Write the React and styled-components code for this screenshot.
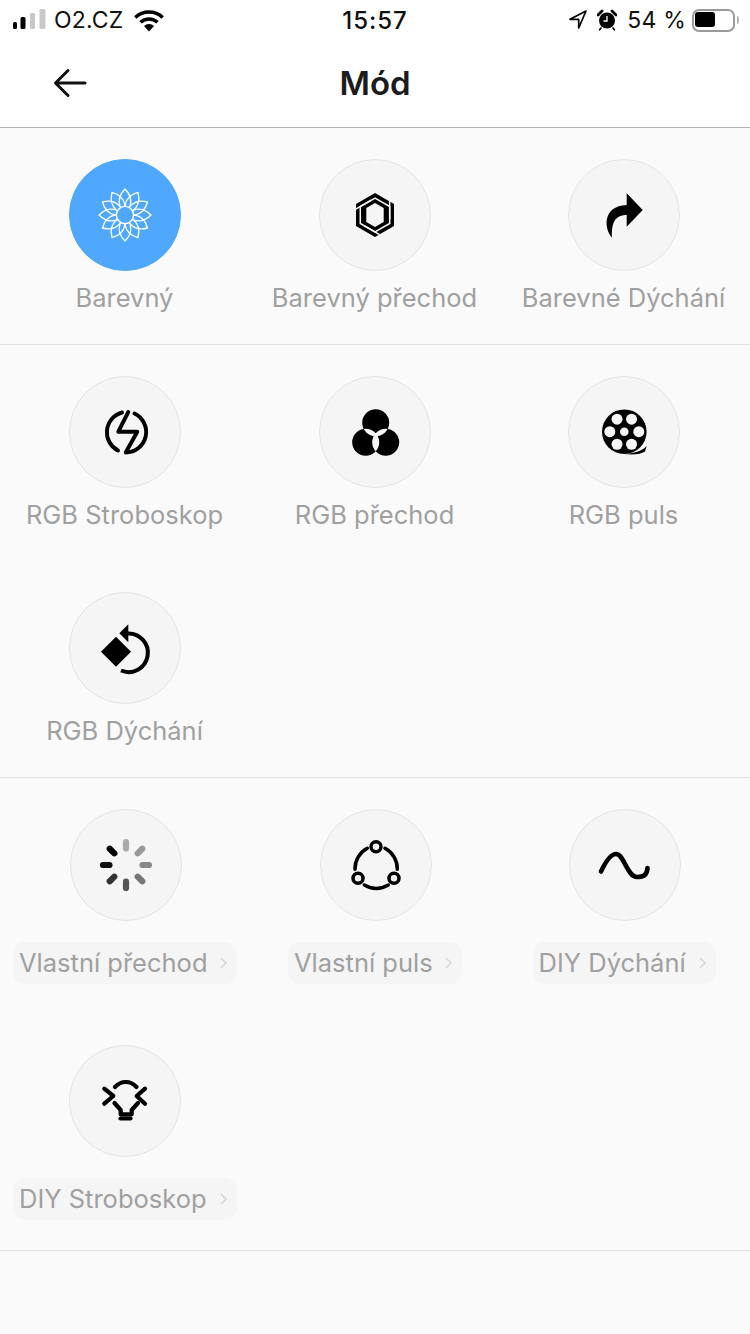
import React from "react";
import styled, { createGlobalStyle } from "styled-components";

const Global = createGlobalStyle`
  html, body { margin: 0; padding: 0; background: #fafafa; }
  body { font-family: Inter, "Noto Sans", "Liberation Sans", sans-serif; }
  * { box-sizing: border-box; }
`;

const Page = styled.div`
  width: 750px;
  height: 1334px;
  background: #fafafa;
  overflow: hidden;
`;
const StatusBar = styled.div`
  height: 40px;
  background: #fff;
  display: grid;
  grid-template-columns: 1fr auto 1fr;
  align-items: center;
  padding: 0 15px 0 13px;
  color: #111;
`;
const StatusGroup = styled.div`
  display: flex;
  align-items: center;
  justify-content: ${(p) => (p.$end ? "flex-end" : "flex-start")};
`;
const Carrier = styled.span`
  font-size: 23px;
  font-weight: 400;
  margin: 0 10px 0 8px;
  letter-spacing: 0.2px;
`;
const Clock = styled.span`
  font-size: 24px;
  font-weight: 500;
  letter-spacing: 1px;
  margin-left: 2px;
`;
const Percent = styled.span`
  font-size: 23px;
  font-weight: 400;
  margin: 0 6px 0 10px;
  letter-spacing: 0.2px;
`;
const Battery = styled.div`
  width: 43px;
  height: 23px;
  border: 2px solid #9b9b9b;
  border-radius: 7px;
  padding: 1px;
  position: relative;
  &::before {
    content: "";
    display: block;
    width: 20px;
    height: 15px;
    border-radius: 3px;
    background: #000;
  }
  &::after {
    content: "";
    position: absolute;
    right: -6px;
    top: 5px;
    width: 2px;
    height: 8px;
    border-radius: 0 2px 2px 0;
    background: #b5b5b5;
  }
`;
const LocateSlot = styled.div`
  display: flex;
  margin-right: 9px;
`;
const Nav = styled.header`
  height: 88px;
  background: #fff;
  border-bottom: 1px solid #b4b4b4;
  display: grid;
  grid-template-columns: 1fr auto 1fr;
  align-items: center;
`;
const BackSlot = styled.div`
  display: flex;
  padding: 0 0 1px 53px;
`;
const Title = styled.h1`
  margin: 0 0 1px;
  font-size: 33px;
  line-height: 40px;
  font-weight: 600;
  color: #1c1c1c;
`;
const Section = styled.section`
  display: grid;
  grid-template-columns: 250px 250px 248px;
  border-bottom: 1px solid #e2e2e2;
`;
const Cell = styled.div`
  height: ${(p) => (p.$pill ? 236 : 216)}px;
  padding-top: 31px;
  display: flex;
  flex-direction: column;
  align-items: center;
`;
const Circle = styled.div`
  width: 112px;
  height: 112px;
  flex: none;
  border-radius: 50%;
  display: flex;
  align-items: center;
  justify-content: center;
  background: ${(p) => (p.$active ? "#4fa8fb" : "#f5f5f5")};
  border: 1px solid ${(p) => (p.$active ? "#4fa8fb" : "#e4e4e4")};
  margin-left: ${(p) => (p.$nudge ? 2 : 0)}px;
`;
const Label = styled.div`
  margin: 12px 1px 0 0;
  height: 30px;
  font-size: 25.5px;
  line-height: 30px;
  color: #a0a0a0;
  white-space: nowrap;
`;
const Pill = styled.div`
  margin-top: 21px;
  height: 42px;
  width: ${(p) => p.$w}px;
  border-radius: 12px;
  background: #f5f5f5;
  padding: 0 0 2px 6px;
  display: flex;
  align-items: center;
  font-size: 25.5px;
  color: #a0a0a0;
  white-space: nowrap;
  position: relative;
`;
const Chevron = styled.svg`
  position: absolute;
  right: 10px;
  top: 15px;
`;

const Ico = ({ children }) => (
  <svg width="110" height="110" viewBox="1 1 110 110">
    {children}
  </svg>
);

const Flower = () => (
  <Ico>
    {Array.from({ length: 12 }).map((_, i) => (
      <path
        key={i}
        d="M56 30 C61 35 63 41 61 47 L56 56 L51 47 C49 41 51 35 56 30 Z"
        fill="none"
        stroke="#fff"
        strokeWidth="1.3"
        strokeLinejoin="round"
        transform={`rotate(${i * 30} 56 56)`}
      />
    ))}
    <circle cx="56" cy="56" r="8.6" fill="#4fa8fb" stroke="#fff" strokeWidth="1.4" />
  </Ico>
);

const Hexa = () => (
  <Ico>
    <path d="M56 34 L75 45 V67 L56 78 L37 67 V45 Z" fill="#000" />
    <path d="M56 44 L64.7 49 V63 L56 68 L47.3 63 V49 Z" fill="#f5f5f5" />
    {[0, 120, 240].map((r) => (
      <path
        key={r}
        d="M35 51.2 L56 39 L70.7 47.5 V60"
        transform={`rotate(${r} 56 56)`}
        fill="none"
        stroke="#f5f5f5"
        strokeWidth="1.5"
      />
    ))}
  </Ico>
);

const Share = () => (
  <Ico>
    <path d="M58.7 34.3 L74.7 51 L58.7 67.7 V56 C50 56 43 60 44 78.5 C36 70 34 47 58.7 46 Z" fill="#000" />
  </Ico>
);

const Bolt = () => (
  <Ico>
    <g fill="none" stroke="#000" strokeWidth="3.9" strokeLinecap="round" strokeLinejoin="round">
      <path d="M59.3 36 L49.3 55.7 H68.3 L56.7 76.5 A20.5 20.5 0 0 0 65.5 37.5" />
      <path d="M53 36.5 A20.5 20.5 0 0 0 49 74.5" />
    </g>
  </Ico>
);

const Trio = () => (
  <Ico>
    <defs>
      <clipPath id="ct">
        <circle cx="56.7" cy="46.7" r="13.5" />
      </clipPath>
      <clipPath id="cl">
        <circle cx="46.7" cy="66.3" r="13.5" />
      </clipPath>
    </defs>
    <circle cx="56.7" cy="46.7" r="13.5" fill="#000" />
    <circle cx="46.7" cy="66.3" r="13.5" fill="#000" />
    <circle cx="66.7" cy="66.3" r="13.5" fill="#000" />
    <circle cx="66.7" cy="66.3" r="13.5" fill="#f5f5f5" clipPath="url(#cl)" />
    <circle cx="46.7" cy="66.3" r="13.5" fill="#f5f5f5" clipPath="url(#ct)" />
    <circle cx="66.7" cy="66.3" r="13.5" fill="#f5f5f5" clipPath="url(#ct)" />
  </Ico>
);

const Reel = () => (
  <Ico>
    <circle cx="56.3" cy="55.7" r="22.3" fill="#000" />
    <path d="M58 78 C67 77 74 75 78.7 70 L77 75.5 C73 78 66 79 56 78 Z" fill="#000" />
    <circle cx="56.3" cy="55.7" r="4.3" fill="#f5f5f5" />
    {[0, 60, 120, 180, 240, 300].map((a) => (
      <circle
        key={a}
        cx={56.3 + 14.5 * Math.cos((a * Math.PI) / 180)}
        cy={55.7 + 14.5 * Math.sin((a * Math.PI) / 180)}
        r="5.5"
        fill="#f5f5f5"
      />
    ))}
  </Ico>
);

const Rotate = () => (
  <Ico>
    <path d="M32 59.7 L47 44.7 L62 59.7 L47 74.7 Z" fill="#000" />
    <path d="M59.3 32.3 V50.3 L50.3 41.3 Z" fill="#000" />
    <path d="M58 41.5 A19.3 19.3 0 1 1 52 78.5" fill="none" stroke="#000" strokeWidth="4" />
  </Ico>
);

const Spinner = () => {
  const colors = ["#aaa", "#999", "#888", "#777", "#555", "#333", "#111", "#000"];
  return (
    <Ico>
      {colors.map((c, i) => (
        <line
          key={i}
          x1="56"
          y1="39.5"
          x2="56"
          y2="33"
          stroke={c}
          strokeWidth="6.2"
          strokeLinecap="round"
          transform={`rotate(${i * 45} 56 56)`}
        />
      ))}
    </Ico>
  );
};

const Network = () => (
  <Ico>
    <g fill="none" stroke="#000" strokeWidth="3.5" strokeLinecap="round">
      <circle cx="56" cy="37.7" r="5" />
      <circle cx="38" cy="69.3" r="5" />
      <circle cx="74" cy="69.3" r="5" />
      <path d="M47.3 39.3 A23 23 0 0 0 35 60.3" />
      <path d="M65 39.3 A23 23 0 0 1 77.3 60.3" />
      <path d="M44.3 76 A23 23 0 0 0 68.3 76" />
    </g>
  </Ico>
);

const Wave = () => (
  <Ico>
    <path
      d="M32 62.5 C36 54 41 45 47 45 C55 45 58 68 68 68 C75 68 78 66 78.5 59"
      fill="none"
      stroke="#000"
      strokeWidth="4.6"
      strokeLinecap="round"
    />
  </Ico>
);

const Bulb = () => (
  <Ico>
    <g fill="none" stroke="#000" strokeWidth="4.2" strokeLinecap="round" strokeLinejoin="round">
      <path d="M46 42 Q50.5 37 56.7 37 Q63 37 67.5 42" />
      <path d="M35.3 43.7 L44.3 51 L35.3 58.7" />
      <path d="M76 43.7 L67.7 51 L76 58.7" />
      <path d="M45.5 58 L51.7 65 V69.3 H62.7 V65 L69 58" />
      <path d="M51.5 73.5 H61.5" />
    </g>
  </Ico>
);

const Signal = () => (
  <svg width="33" height="22" viewBox="0 0 33 22">
    <rect x="0" y="13" width="4" height="7" rx="1.5" fill="#000" />
    <rect x="7.5" y="8" width="5" height="12" rx="1.5" fill="#000" />
    <rect x="17" y="4" width="5" height="16" rx="1.5" fill="#c9c9c9" />
    <rect x="26.5" y="0" width="6" height="20" rx="1.5" fill="#c9c9c9" />
  </svg>
);
const Wifi = () => (
  <svg width="30" height="23" viewBox="0 0 30 23">
    <g fill="none" stroke="#000" strokeWidth="3.6">
      <path d="M1.3 8.5 A20 20 0 0 1 28.7 8.5" />
      <path d="M6.5 13.3 A12.5 12.5 0 0 1 23.5 13.3" />
    </g>
    <path d="M10 17 A7 7 0 0 1 20 17 L15 22.5 Z" fill="#000" />
  </svg>
);
const Locate = () => (
  <svg width="20" height="22" viewBox="0 0 20 22">
    <path
      d="M18 2 L2 10.3 H10.7 V19 Z"
      fill="none"
      stroke="#000"
      strokeWidth="1.7"
      strokeLinejoin="round"
    />
  </svg>
);
const Alarm = () => (
  <svg width="20" height="22" viewBox="0 0 20 22">
    <circle cx="10" cy="11.5" r="8" fill="#000" />
    <path d="M1 6 L5 2 M19 6 L15 2" stroke="#000" strokeWidth="2.8" strokeLinecap="round" />
    <path d="M4 19 L2.6 20.8 M16 19 L17.4 20.8" stroke="#000" strokeWidth="1.6" strokeLinecap="round" />
    <path d="M10 7 V12 H6.5" fill="none" stroke="#fff" strokeWidth="1.3" />
  </svg>
);
const Back = () => (
  <svg width="34" height="30" viewBox="0 0 34 30">
    <path
      d="M32 15 H3 M15 2.5 L2.5 15 L15 27.5"
      fill="none"
      stroke="#111"
      strokeWidth="3"
      strokeLinecap="round"
      strokeLinejoin="round"
    />
  </svg>
);

const Mode = ({ icon, label, active }) => (
  <Cell>
    <Circle $active={active}>{icon}</Circle>
    <Label>{label}</Label>
  </Cell>
);
const CustomMode = ({ icon, label, width, nudge }) => (
  <Cell $pill>
    <Circle $nudge={nudge}>{icon}</Circle>
    <Pill $w={width}>
      {label}
      <Chevron width="7" height="12" viewBox="0 0 7 12">
        <path d="M1 1 L6 6 L1 11" fill="none" stroke="#d6d6d6" strokeWidth="1.5" />
      </Chevron>
    </Pill>
  </Cell>
);

export default function App() {
  return (
    <Page>
      <Global />
      <StatusBar>
        <StatusGroup>
          <Signal />
          <Carrier>O2.CZ</Carrier>
          <Wifi />
        </StatusGroup>
        <Clock>15:57</Clock>
        <StatusGroup $end>
          <LocateSlot>
            <Locate />
          </LocateSlot>
          <Alarm />
          <Percent>54 %</Percent>
          <Battery />
        </StatusGroup>
      </StatusBar>
      <Nav>
        <BackSlot>
          <Back />
        </BackSlot>
        <Title>Mód</Title>
        <div />
      </Nav>
      <Section>
        <Mode icon={<Flower />} label="Barevný" active />
        <Mode icon={<Hexa />} label="Barevný přechod" />
        <Mode icon={<Share />} label="Barevné Dýchání" />
      </Section>
      <Section>
        <Mode icon={<Bolt />} label="RGB Stroboskop" />
        <Mode icon={<Trio />} label="RGB přechod" />
        <Mode icon={<Reel />} label="RGB puls" />
        <Mode icon={<Rotate />} label="RGB Dýchání" />
      </Section>
      <Section>
        <CustomMode icon={<Spinner />} label="Vlastní přechod" width={224} nudge />
        <CustomMode icon={<Network />} label="Vlastní puls" width={174} nudge />
        <CustomMode icon={<Wave />} label="DIY Dýchání" width={183} nudge />
        <CustomMode icon={<Bulb />} label="DIY Stroboskop" width={224} />
      </Section>
    </Page>
  );
}
